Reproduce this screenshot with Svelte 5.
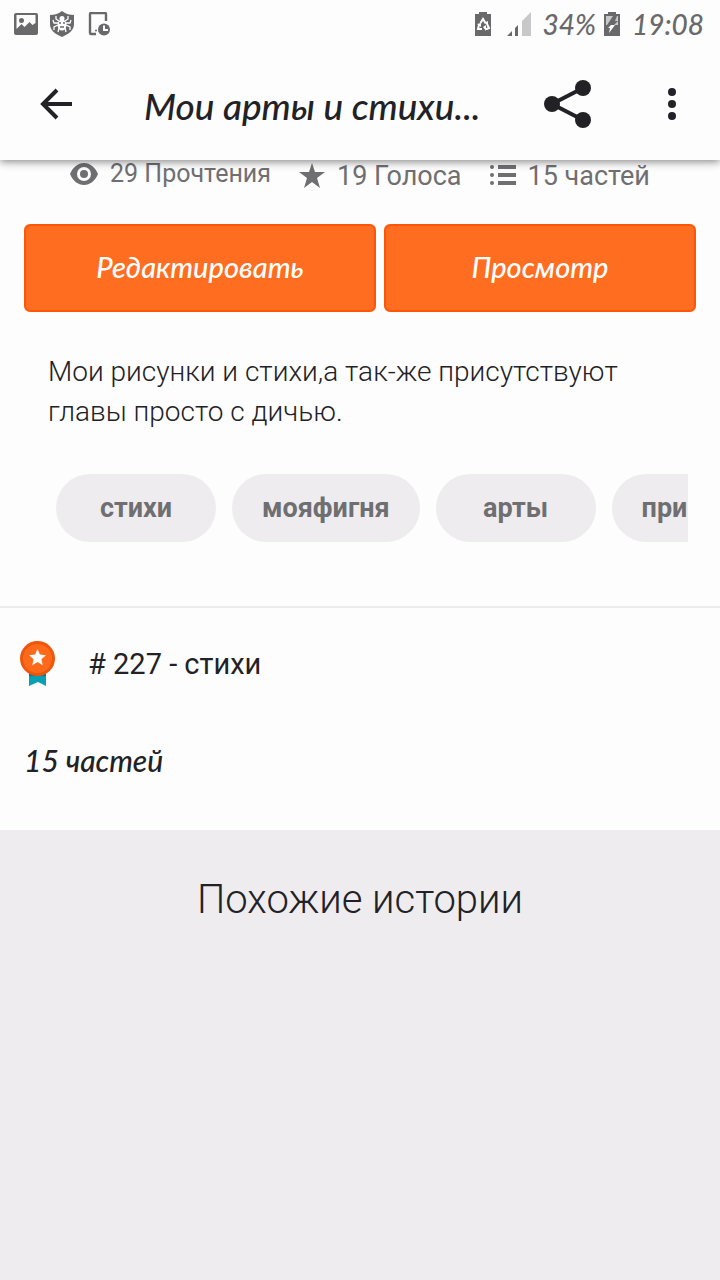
<script>
    let title = "Мои арты и стихи...";
    let tags = ["стихи", "мояфигня", "арты", "при"];
</script>

<div class="screen">
    <header>
        <div class="statusbar">
            <div class="statusgroup left">
                <svg width="24" height="24" viewBox="0 0 24 24">
                    <path fill="#69696b" fill-rule="evenodd" d="M2 1h20a2 2 0 0 1 2 2v18a2 2 0 0 1-2 2H2a2 2 0 0 1-2-2V3a2 2 0 0 1 2-2zM2.500 3v14l5-5 3 3 5-5 3 3 3-2V3zM7.500 6a2.500 2.500 0 1 1 0 5 2.500 2.500 0 0 1 0-5z" />
                </svg>
                <svg width="24" height="26" viewBox="0 0 24 26">
                    <path fill="#69696b" d="M12 0c4 3 8 4 12 4v9c0 6-5 10-12 13C5 23 0 19 0 13V4c4 0 8-1 12-4z" />
                    <path fill="none" stroke="#fff" stroke-width="1.300" d="M9 10 6 8V5M15 10l3-2V5M8 12H4L3 9M16 12h4l1-3M8 14l-4 2v3M16 14l4 2v3M9 17l-1 4M15 17l1 4" />
                    <ellipse cx="12" cy="14" rx="4.500" ry="5.500" fill="#fff" />
                    <circle cx="12" cy="7.500" r="2.500" fill="#fff" />
                    <path stroke="#69696b" stroke-width="1.300" d="M9 12h2M13 12h2M10 16h4" />
                </svg>
                <svg width="24" height="24" viewBox="0 0 24 24">
                    <path fill="none" stroke="#69696b" stroke-width="2.400" d="M10 22H5a1 1 0 0 1-1-1V2a1 1 0 0 1 1-1h14a1 1 0 0 1 1 1v7" />
                    <circle cx="10" cy="18.500" r="1" fill="#69696b" />
                    <circle cx="18" cy="17.500" r="6" fill="#69696b" />
                    <path fill="none" stroke="#fff" stroke-width="2" d="M18 13.500V18h4" />
                </svg>
            </div>
            <div class="statusgroup">
                <svg width="16" height="24" viewBox="0 0 16 24">
                    <path fill="#69696b" d="M4 0h8v2h4v22H0V2h4z" />
                    <path fill="none" stroke="#fff" stroke-width="2" d="M5.500 11 8 7l2.500 4M12 12l2 4-2 1h-2M7 17H3l1-4" />
                    <path fill="#fff" d="m8 15 3-2v6zM2 12l4-1v4zM9 11l4-2v4z" />
                </svg>
                <svg class="signal" width="24" height="24" viewBox="0 0 24 24">
                    <path fill="#69696b" d="M0 24l5-5v5zM8 24v-8l3-3v11z" />
                    <path fill="#c8c8ca" d="M15 24V9l9-9v24z" />
                </svg>
                <span class="hand percent">34%</span>
                <svg width="16" height="24" viewBox="0 0 16 24">
                    <path fill="#69696b" d="M4 0h8v2h4v22H0V2h4z" />
                    <path fill="#c8c8ca" d="M2 4h12v9H2z" />
                    <path fill="#69696b" d="M9 4h4l-2 5h3l-4 4H3z" />
                    <path fill="#fff" d="M7 13h4l-6 8 1-5H4z" />
                </svg>
                <span class="hand">19:08</span>
            </div>
        </div>
        <div class="toolbar">
            <button class="iconbutton" aria-label="Назад">
                <svg width="32" height="32" viewBox="0 0 32 32">
                    <path fill="none" stroke="#222226" stroke-width="4" d="M17 2 3 16l14 14M3 16h29" />
                </svg>
            </button>
            <h1 class="hand">{title}</h1>
            <button class="iconbutton" aria-label="Поделиться">
                <svg width="48" height="48" viewBox="0 0 48 48">
                    <path fill="none" stroke="#222226" stroke-width="4" d="M39 8 8 24l31 16" />
                    <circle cx="39" cy="8" r="8" fill="#222226" />
                    <circle cx="8" cy="24" r="8" fill="#222226" />
                    <circle cx="39" cy="40" r="8" fill="#222226" />
                </svg>
            </button>
            <button class="iconbutton more" aria-label="Ещё">
                <svg width="8" height="32" viewBox="0 0 8 32">
                    <circle cx="4" cy="4" r="4" fill="#222226" />
                    <circle cx="4" cy="16" r="4" fill="#222226" />
                    <circle cx="4" cy="28" r="4" fill="#222226" />
                </svg>
            </button>
        </div>
    </header>

    <main>
        <ul class="stats">
            <li class="reads">
                <svg width="28" height="22" viewBox="0 0 28 22">
                    <path fill="#6f6f72" fill-rule="evenodd" d="M14 0c6 0 11 4 14 11-3 7-8 11-14 11S3 18 0 11C3 4 8 0 14 0zm0 4a7 7 0 1 0 0 14 7 7 0 0 0 0-14z" />
                    <circle cx="14" cy="11" r="4" fill="#6f6f72" />
                </svg>
                29 Прочтения
            </li>
            <li>
                <svg width="26" height="26" viewBox="0 0 26 26">
                    <path fill="#6f6f72" d="m13 0 3 9h10l-8 6 3 10-8-6-8 6 3-10-8-6h10z" />
                </svg>
                19 Голоса
            </li>
            <li>
                <svg width="26" height="22" viewBox="0 0 26 22">
                    <path stroke="#6f6f72" stroke-width="4" d="M8 2h18M8 10h18M8 18h18" />
                    <g fill="#6f6f72">
                        <circle cx="2" cy="2" r="2" />
                        <circle cx="2" cy="10" r="2" />
                        <circle cx="2" cy="18" r="2" />
                    </g>
                </svg>
                15 частей
            </li>
        </ul>

        <div class="actions">
            <button class="hand">Редактировать</button>
            <button class="hand">Просмотр</button>
        </div>

        <p class="description">Мои рисунки и стихи,а так-же присутствуют главы просто с дичью.</p>

        <div class="tags">
            {#each tags as tag}
                <a href="#{tag}">{tag}</a>
            {/each}
        </div>
    </main>

    <section class="info">
        <div class="rank">
            <svg width="36" height="46" viewBox="0 0 36 46">
                <path fill="#0aa0b4" d="M9 30h17v15l-8-4-9 4z" />
                <path fill="#08798a" d="M9 33h17v2H9z" />
                <circle cx="17.500" cy="17.500" r="17.500" fill="#ee560e" />
                <circle cx="17.500" cy="17.500" r="14.500" fill="#ff6a1a" />
                <path fill="#fff" d="m17.500 8 2.400 5.600 6 .6-4.500 4 1.400 6-5.300-3.200-5.300 3.200 1.400-6-4.500-4 6-.6z" />
            </svg>
            <span># 227 - стихи</span>
        </div>
        <h2 class="hand">15 частей</h2>
    </section>

    <section class="similar">
        <h2>Похожие истории</h2>
    </section>
</div>

<style>
    :global(body) {
        background: #fdfdfd;
    }

    .screen {
        min-height: 100vh;
        display: flex;
        flex-direction: column;
        font-family: Roboto, "Noto Sans", sans-serif;
        color: #222226;
        overflow: hidden;
    }

    h1, h2, p, ul {
        margin: 0;
        padding: 0;
    }

    button {
        border: 0;
        cursor: pointer;
    }

    svg {
        display: block;
        flex: none;
    }

    .hand {
        font-family: "Lato", "Noto Sans", cursive;
        font-style: italic;
        font-weight: 500;
    }

    header {
        background: #fdfdfd;
        box-shadow: 0 2px 8px rgba(0, 0, 0, 0.45);
        position: relative;
    }

    .statusbar {
        display: flex;
        justify-content: space-between;
        height: 48px;
        padding: 0 16px 0 14px;
        color: #69696b;
        font-size: 28px;
    }

    .statusgroup {
        display: flex;
        align-items: center;
        gap: 12px;
    }

    .signal {
        margin-left: 4px;
    }

    .percent {
        margin: 0 -4px 0 0;
    }

    .toolbar {
        display: flex;
        align-items: center;
        height: 112px;
        padding: 0 44px 0 40px;
    }

    .toolbar h1 {
        flex: 1;
        padding: 4px 0 0 72px;
        font-size: 37px;
        line-height: 48px;
        white-space: nowrap;
    }

    .iconbutton {
        padding: 0;
        background: none;
    }

    .more {
        margin-left: 76px;
    }

    .stats {
        display: flex;
        justify-content: center;
        gap: 28px;
        height: 32px;
        list-style: none;
        font-size: 27px;
        line-height: 32px;
        color: #6f6f72;
    }

    .stats li {
        display: flex;
        align-items: center;
        gap: 12px;
        white-space: nowrap;
    }

    .stats .reads {
        height: 28px;
        font-size: 25px;
    }

    .actions {
        display: grid;
        grid-template-columns: 44fr 39fr;
        gap: 8px;
        padding: 32px 24px 40px;
    }

    .actions button {
        height: 88px;
        padding: 0 0 4px;
        border: 2px solid #fd5607;
        border-radius: 6px;
        background: #ff6d20;
        color: white;
        font-size: 29px;
    }

    .description {
        padding: 0 48px;
        font-size: 28px;
        font-weight: 300;
        line-height: 40px;
    }

    .tags {
        display: flex;
        gap: 16px;
        margin: 42px 32px 64px 56px;
        overflow: hidden;
    }

    .tags a {
        flex: none;
        box-sizing: border-box;
        min-width: 160px;
        padding: 0 30px;
        border-radius: 34px;
        background: #eeecef;
        color: #6f6f72;
        font-size: 27px;
        font-weight: 700;
        line-height: 68px;
        text-align: center;
        text-decoration: none;
    }

    /* the last tag runs off the edge of the strip */
    .tags a:last-child {
        text-align: left;
    }

    .info {
        border-top: 2px solid #ececec;
        padding: 32px 20px 48px;
    }

    .rank {
        display: flex;
        align-items: center;
        gap: 32px;
        height: 48px;
        font-size: 29px;
    }

    .info h2 {
        padding: 52px 4px 2px;
        font-size: 30px;
        line-height: 40px;
    }

    .similar {
        flex: 1;
        padding: 44px 24px;
        background: #eeecef;
        text-align: center;
    }

    .similar h2 {
        font-size: 40px;
        font-weight: 300;
        line-height: 52px;
    }
</style>
